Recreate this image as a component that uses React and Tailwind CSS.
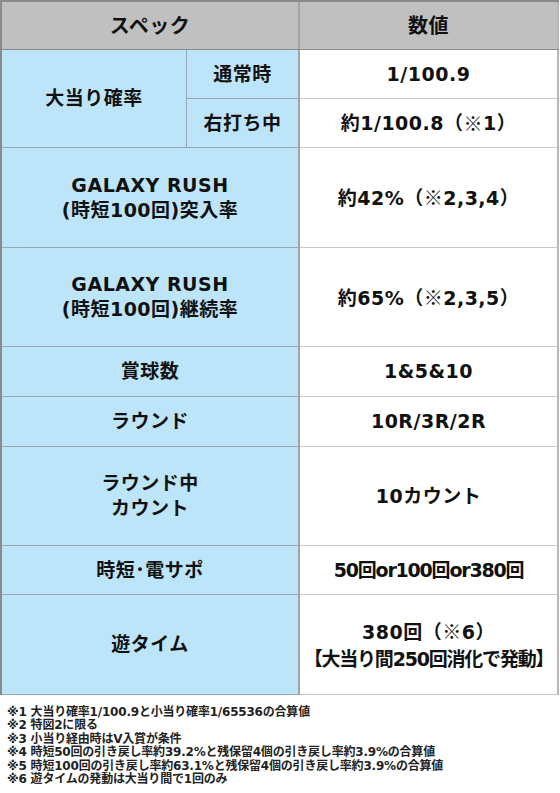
import React from "react";

const font = { fontFamily: '"DejaVu Sans", "Noto Sans CJK JP", sans-serif' };
const cjk = { fontFamily: '"Noto Sans CJK JP", sans-serif' };

const notes = [
  "※1 大当り確率1/100.9と小当り確率1/65536の合算値",
  "※2 特図2に限る",
  "※3 小当り経由時はV入賞が条件",
  "※4 時短50回の引き戻し率約39.2%と残保留4個の引き戻し率約3.9%の合算値",
  "※5 時短100回の引き戻し率約63.1%と残保留4個の引き戻し率約3.9%の合算値",
  "※6 遊タイムの発動は大当り間で1回のみ",
];

const rows = [
  { label: ["GALAXY RUSH", "(時短100回)突入率"], value: ["約42%（※2,3,4）"], h: "h-[100px]" },
  { label: ["GALAXY RUSH", "(時短100回)継続率"], value: ["約65%（※2,3,5）"], h: "h-[99px]" },
  { label: ["賞球数"], value: ["1&5&10"], h: "h-[50px]" },
  { label: ["ラウンド"], value: ["10R/3R/2R"], h: "h-[50px]" },
  { label: ["ラウンド中", "カウント"], value: ["10カウント"], h: "h-[99px]" },
  { label: ["時短･電サポ"], value: ["50回or100回or380回"], h: "h-[49px]" },
  { label: ["遊タイム"], value: ["380回（※6）", "【大当り間250回消化で発動】"], h: "h-[100px]" },
];

// ※ is drawn thin in the original
function Mark({ text }) {
  const parts = text.split("※");
  return parts.map((p, i) => (
    <React.Fragment key={i}>
      {i > 0 && <span className="font-normal" style={cjk}>※</span>}
      {p}
    </React.Fragment>
  ));
}

function Lines({ items }) {
  return items.map((t, i) => (
    <div key={i} className={t.length > 12 ? "whitespace-nowrap tracking-[-1.2px]" : "whitespace-nowrap"}>
      <Mark text={t} />
    </div>
  ));
}

export default function App() {
  return (
    <div className="w-[560px] h-[793px] bg-white text-[#111] font-bold" style={font}>
      <div className="w-[559px] border-t-2 border-l-2 border-[#8a8a8a] text-[19px] tracking-[0.5px]">
        <div className="flex h-[48px] bg-[#c0c0c0] border-b border-[#8c8c8c] text-[20px]">
          <div className="w-[298px] flex items-center justify-center border-r-2 border-[#a4a4a4]">スペック</div>
          <div className="flex-1 flex items-center justify-center border-r-2 border-[#b8b8b8]">数値</div>
        </div>

        <div className="flex h-[98px]">
          <div className="w-[185px] bg-[#bde5f9] flex items-center justify-center border-r border-b border-[#97a7b0]">大当り確率</div>
          <div className="w-[113px] flex flex-col border-r-2 border-[#a4a4a4]">
            <div className="h-[49px] bg-[#bde5f9] flex items-center justify-center border-b border-[#97a7b0]">通常時</div>
            <div className="h-[49px] bg-[#bde5f9] flex items-center justify-center border-b border-[#97a7b0]">右打ち中</div>
          </div>
          <div className="flex-1 flex flex-col border-r-2 border-[#b8b8b8]">
            <div className="h-[49px] flex items-center justify-center border-b border-[#c9c9c9]">1/100.9</div>
            <div className="h-[49px] flex items-center justify-center border-b border-[#c9c9c9]">
              <Mark text="約1/100.8（※1）" />
            </div>
          </div>
        </div>

        {rows.map((r, i) => (
          <div key={i} className={`flex ${r.h}`}>
            <div className="w-[298px] bg-[#bde5f9] flex flex-col items-center justify-center leading-[25px] text-center border-r-2 border-b border-r-[#a4a4a4] border-b-[#97a7b0]">
              <Lines items={r.label} />
            </div>
            <div className="flex-1 flex flex-col items-center justify-center leading-[27px] text-center border-r-2 border-b border-r-[#b8b8b8] border-b-[#c9c9c9]">
              <Lines items={r.value} />
            </div>
          </div>
        ))}
      </div>

      <div className="pt-[11px] pl-[7px] text-[12px] leading-[13.4px] tracking-[-0.2px] text-[#222]">
        {notes.map((n, i) => (
          <div key={i} className="whitespace-nowrap">{n}</div>
        ))}
      </div>
    </div>
  );
}
